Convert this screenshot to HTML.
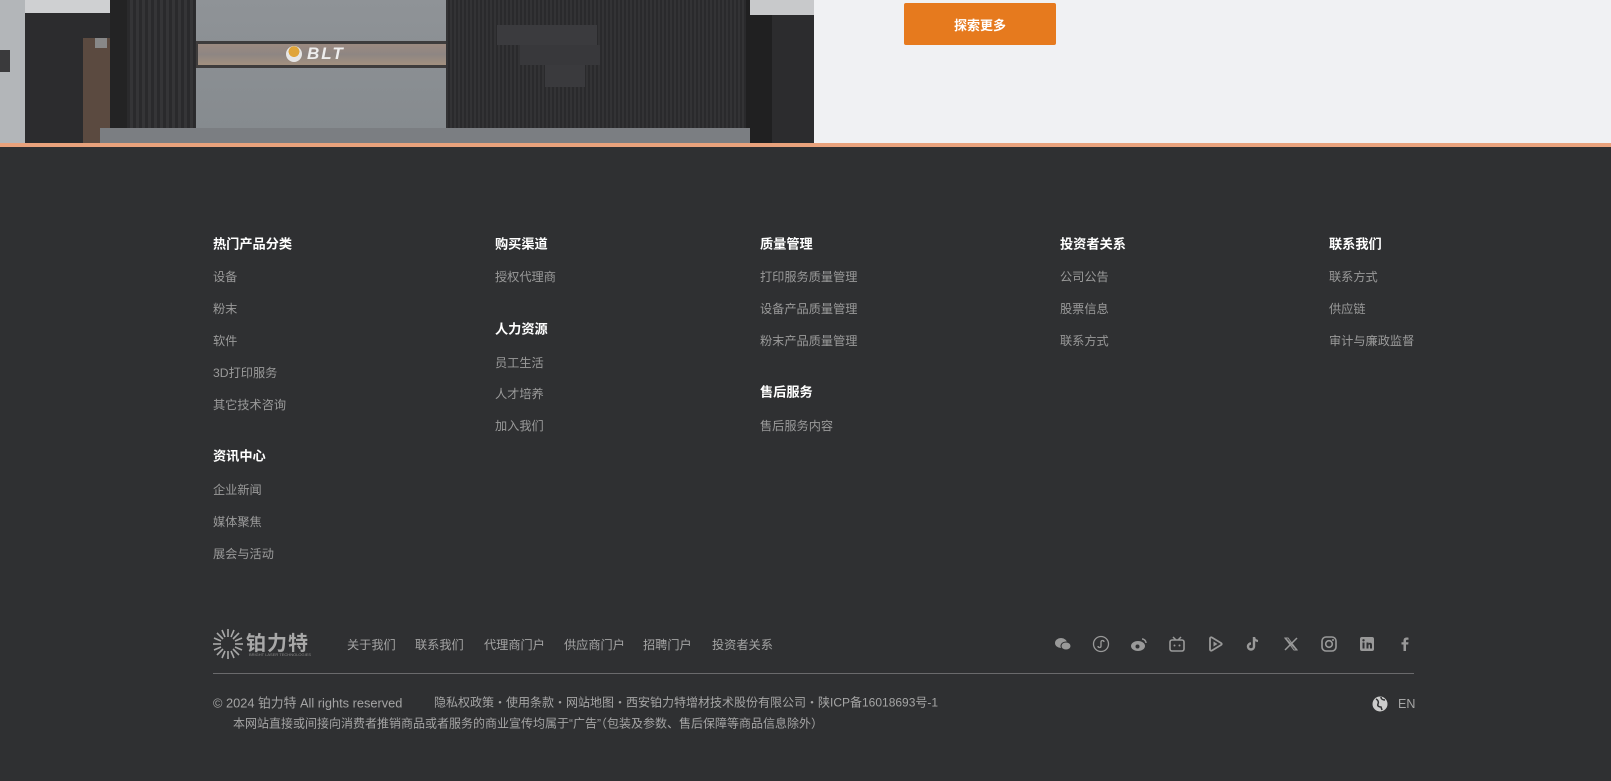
<!DOCTYPE html>
<html><head><meta charset="utf-8"><style>
*{margin:0;padding:0;box-sizing:border-box}
body{width:1611px;height:781px;overflow:hidden;background:#2f3032;font-family:"Liberation Sans","Noto Sans CJK SC",sans-serif;position:relative}
.a{position:absolute}
.top{left:0;top:0;width:1611px;height:143px;background:#f0f1f3}
.bar{left:0;top:143px;width:1611px;height:4px;background:#e9a27c}
.btn{left:904px;top:3px;width:152px;height:42px;background:#e67a1e;color:#fff;font-size:13px;font-weight:bold;display:flex;align-items:center;justify-content:center;border-radius:2px}
.h{color:#fff;font-size:13.2px;font-weight:bold;position:absolute;transform:translateY(-50%)}
.l{color:#9a9a9a;font-size:12.2px;position:absolute;transform:translateY(-50%);white-space:nowrap}
.b{color:#a5a5a5;font-size:12.2px;position:absolute;transform:translateY(-50%);white-space:nowrap}
.ic{position:absolute;top:635px;width:18px;height:18px}
</style></head><body>
<div class="a top"></div>
<div class="a" style="left:0;top:0;width:814px;height:143px;background:#2c2c2e;overflow:hidden">
 <div class="a" style="left:0;top:0;width:25px;height:143px;background:#b3b6b9"></div>
 <div class="a" style="left:0;top:50px;width:10px;height:22px;background:#3a3a3c"></div>
 <div class="a" style="left:25px;top:0;width:100px;height:13px;background:#cfd0d2"></div>
 <div class="a" style="left:83px;top:38px;width:27px;height:105px;background:#5b4a40"></div>
 <div class="a" style="left:95px;top:38px;width:12px;height:10px;background:#888"></div>
 <div class="a" style="left:110px;top:0;width:17px;height:143px;background:#232324"></div>
 <div class="a" style="left:127px;top:0;width:68px;height:143px;background:repeating-linear-gradient(90deg,#2a2a2c 0 3px,#353537 3px 6px)"></div>
 <div class="a" style="left:196px;top:0;width:250px;height:143px;background:linear-gradient(180deg,#8f9397,#858a8e)"></div>
 <div class="a" style="left:196px;top:41px;width:250px;height:27px;background:#3e3c3c"></div>
 <div class="a" style="left:198px;top:44px;width:248px;height:21px;background:linear-gradient(180deg,#9c8a80,#8e8683,#a3907f)"></div>
 <div class="a" style="left:286px;top:46px;width:16px;height:16px;border-radius:50%;background:radial-gradient(circle at 50% 35%,#e0a53a 40%,#e6e6e6 42%)"></div>
 <div class="a" style="left:307px;top:44px;color:#eee;font-weight:bold;font-style:italic;font-size:17px;letter-spacing:2px">BLT</div>
 <div class="a" style="left:446px;top:0;width:300px;height:143px;background:repeating-linear-gradient(90deg,#333335 0 2px,#2a2a2c 2px 4px)"></div>
 <div class="a" style="left:497px;top:25px;width:100px;height:20px;background:#3b3b3e"></div>
 <div class="a" style="left:520px;top:45px;width:80px;height:20px;background:#38383b"></div>
 <div class="a" style="left:545px;top:65px;width:40px;height:22px;background:#3a3a3d"></div>
 <div class="a" style="left:746px;top:0;width:26px;height:143px;background:#202021"></div>
 <div class="a" style="left:772px;top:0;width:42px;height:143px;background:#2c2c2e"></div>
 <div class="a" style="left:750px;top:0;width:64px;height:15px;background:#c8c9cb"></div>
 <div class="a" style="left:100px;top:128px;width:650px;height:15px;background:#7b7e82"></div>
</div>
<div class="a bar"></div>
<div class="a btn">探索更多</div>

<div class="h" style="left:213px;top:243px">热门产品分类</div>
<div class="l" style="left:213px;top:276px">设备</div>
<div class="l" style="left:213px;top:308px">粉末</div>
<div class="l" style="left:213px;top:340px">软件</div>
<div class="l" style="left:213px;top:372px">3D打印服务</div>
<div class="l" style="left:213px;top:404px">其它技术咨询</div>
<div class="h" style="left:213px;top:455px">资讯中心</div>
<div class="l" style="left:213px;top:489px">企业新闻</div>
<div class="l" style="left:213px;top:521px">媒体聚焦</div>
<div class="l" style="left:213px;top:553px">展会与活动</div>

<div class="h" style="left:495px;top:243px">购买渠道</div>
<div class="l" style="left:495px;top:276px">授权代理商</div>
<div class="h" style="left:495px;top:328px">人力资源</div>
<div class="l" style="left:495px;top:362px">员工生活</div>
<div class="l" style="left:495px;top:393px">人才培养</div>
<div class="l" style="left:495px;top:425px">加入我们</div>

<div class="h" style="left:760px;top:243px">质量管理</div>
<div class="l" style="left:760px;top:276px">打印服务质量管理</div>
<div class="l" style="left:760px;top:308px">设备产品质量管理</div>
<div class="l" style="left:760px;top:340px">粉末产品质量管理</div>
<div class="h" style="left:760px;top:391px">售后服务</div>
<div class="l" style="left:760px;top:425px">售后服务内容</div>

<div class="h" style="left:1060px;top:243px">投资者关系</div>
<div class="l" style="left:1060px;top:276px">公司公告</div>
<div class="l" style="left:1060px;top:308px">股票信息</div>
<div class="l" style="left:1060px;top:340px">联系方式</div>

<div class="h" style="left:1329px;top:243px">联系我们</div>
<div class="l" style="left:1329px;top:276px">联系方式</div>
<div class="l" style="left:1329px;top:308px">供应链</div>
<div class="l" style="left:1329px;top:340px">审计与廉政监督</div>

<svg class="a" style="left:212px;top:628px" width="32" height="32" viewBox="0 0 32 32"><g stroke="#a8a8a8" stroke-width="1.6"><line x1="16" y1="1" x2="16" y2="9"/><line x1="16" y1="23" x2="16" y2="31"/><line x1="1" y1="16" x2="9" y2="16"/><line x1="23" y1="16" x2="31" y2="16"/><line x1="5" y1="5" x2="11" y2="11"/><line x1="21" y1="21" x2="27" y2="27"/><line x1="27" y1="5" x2="21" y2="11"/><line x1="5" y1="27" x2="11" y2="21"/><line x1="10" y1="2" x2="13" y2="9"/><line x1="22" y1="2" x2="19" y2="9"/><line x1="10" y1="30" x2="13" y2="23"/><line x1="22" y1="30" x2="19" y2="23"/><line x1="2" y1="10" x2="9" y2="13"/><line x1="2" y1="22" x2="9" y2="19"/><line x1="30" y1="10" x2="23" y2="13"/><line x1="30" y1="22" x2="23" y2="19"/></g></svg>
<div class="a" style="left:246px;top:627px;color:#a8a8a8;font-size:20px;font-weight:bold;letter-spacing:1px">铂力特</div>
<div class="a" style="left:249px;top:652px;color:#888;font-size:4px">BRIGHT LASER TECHNOLOGIES</div>

<div class="b" style="left:347px;top:644px">关于我们</div>
<div class="b" style="left:415px;top:644px">联系我们</div>
<div class="b" style="left:484px;top:644px">代理商门户</div>
<div class="b" style="left:564px;top:644px">供应商门户</div>
<div class="b" style="left:643px;top:644px">招聘门户</div>
<div class="b" style="left:712px;top:644px">投资者关系</div>

<svg class="ic" style="left:1054px" viewBox="0 0 18 18"><ellipse cx="7" cy="8" rx="6" ry="5" fill="#999"/><ellipse cx="12" cy="11" rx="5" ry="4" fill="#999" stroke="#2f3032" stroke-width="1"/></svg>
<svg class="ic" style="left:1092px" viewBox="0 0 18 18"><circle cx="9" cy="9" r="7.5" fill="none" stroke="#999" stroke-width="1.3"/><path d="M6 11c0 2 3 2 3 0V7c0-2 3-2 3 0" fill="none" stroke="#999" stroke-width="1.3"/></svg>
<svg class="ic" style="left:1130px" viewBox="0 0 18 18"><ellipse cx="8" cy="11" rx="7" ry="5" fill="#999"/><circle cx="7.5" cy="11.5" r="2" fill="#2f3032"/><path d="M12 4a4 4 0 0 1 4 4" stroke="#999" stroke-width="1.5" fill="none"/></svg>
<svg class="ic" style="left:1168px" viewBox="0 0 18 18"><rect x="2" y="5" width="14" height="11" rx="2" fill="none" stroke="#999" stroke-width="1.6"/><path d="M5 2l3 3M13 2l-3 3" stroke="#999" stroke-width="1.5"/><circle cx="6.5" cy="10.5" r="1" fill="#999"/><circle cx="11.5" cy="10.5" r="1" fill="#999"/></svg>
<svg class="ic" style="left:1206px" viewBox="0 0 18 18"><path d="M4 3.5c0-1 1-1.5 2-1l9 5.5c1 .6 1 1.4 0 2l-9 5.5c-1 .5-2 0-2-1z" fill="none" stroke="#999" stroke-width="1.8"/><path d="M7.5 6.5v5l4-2.5z" fill="#999"/></svg>
<svg class="ic" style="left:1244px" viewBox="0 0 18 18"><path d="M10 2v9.5a3 3 0 1 1-3-3" fill="none" stroke="#999" stroke-width="2.4"/><path d="M10 2.5c.5 2 2 3.3 4 3.5" fill="none" stroke="#999" stroke-width="2.2"/></svg>
<svg class="ic" style="left:1282px" viewBox="0 0 18 18"><path d="M3 3l12 12M15 3L3 15" stroke="#999" stroke-width="1.5"/><path d="M3 3h3l9 12h-3z" fill="none" stroke="#999" stroke-width="1"/></svg>
<svg class="ic" style="left:1320px" viewBox="0 0 18 18"><rect x="2" y="2" width="14" height="14" rx="4" fill="none" stroke="#999" stroke-width="1.6"/><circle cx="9" cy="9" r="3.3" fill="none" stroke="#999" stroke-width="1.6"/><circle cx="13" cy="5" r="1" fill="#999"/></svg>
<svg class="ic" style="left:1358px" viewBox="0 0 18 18"><rect x="2" y="2" width="14" height="14" rx="2" fill="#999"/><rect x="4.5" y="7.5" width="2" height="6" fill="#2f3032"/><circle cx="5.5" cy="5.3" r="1.2" fill="#2f3032"/><path d="M8.5 13.5v-6h2v1c.5-1 3.5-1.5 3.5 1.5v3.5h-2V10.5c0-1.5-1.5-1.5-1.5 0v3z" fill="#2f3032"/></svg>
<svg class="ic" style="left:1396px" viewBox="0 0 18 18"><path d="M10 16V9.5h2.2l.3-2.3H10V5.8c0-.7.2-1.1 1.2-1.1h1.3V2.6c-.3 0-1-.1-1.9-.1-1.9 0-3.1 1.1-3.1 3.2v1.5H5.5v2.3h2V16z" fill="#999"/></svg>

<div class="a" style="left:213px;top:673px;width:1201px;height:1px;background:#6a6a6c"></div>
<div class="b" style="left:213px;top:702px;font-size:12.8px">© 2024 铂力特 All rights reserved</div>
<div class="b" style="left:434px;top:702px;font-size:12px">隐私权政策・使用条款・网站地图・西安铂力特增材技术股份有限公司・陕ICP备16018693号-1</div>
<div class="b" style="left:233px;top:723px;font-size:12px">本网站直接或间接向消费者推销商品或者服务的商业宣传均属于“广告”（包装及参数、售后保障等商品信息除外）</div>
<svg class="a" style="left:1372px;top:696px" width="16" height="16" viewBox="0 0 16 16"><circle cx="8" cy="8" r="7.5" fill="#ccc"/><path d="M4 3c2 1 3 3 2 5s1 3 3 3l1 3M9 1c0 2 2 3 4 3" fill="none" stroke="#2f3032" stroke-width="1.5"/></svg>
<div class="b" style="left:1398px;top:704px;font-size:12.5px">EN</div>
</body></html>
